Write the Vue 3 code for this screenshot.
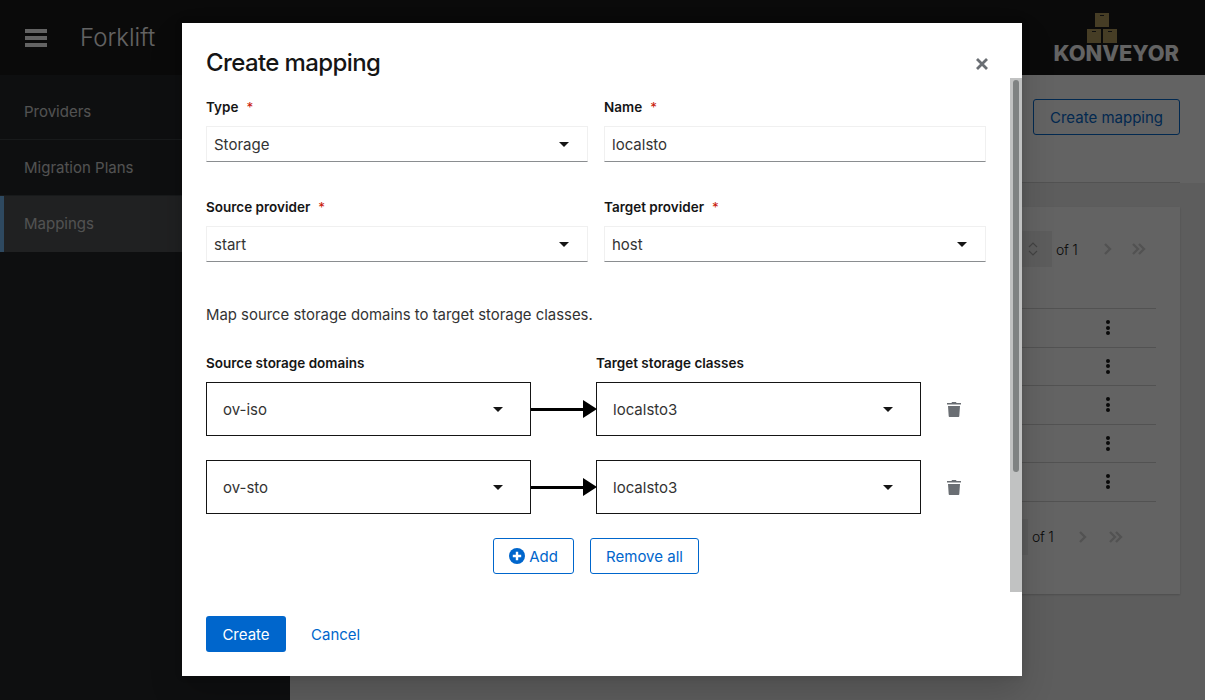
<script setup>
const nav = [
  { label: 'Providers', active: false },
  { label: 'Migration Plans', active: false },
  { label: 'Mappings', active: true },
]
const rows = [1, 2, 3, 4, 5]
const fields = [
  { label: 'Type', value: 'Storage', select: true },
  { label: 'Name', value: 'localsto', select: false },
  { label: 'Source provider', value: 'start', select: true },
  { label: 'Target provider', value: 'host', select: true },
]
const mappings = [
  { source: 'ov-iso', target: 'localsto3' },
  { source: 'ov-sto', target: 'localsto3' },
]
</script>

<template>
  <div class="page">
    <header class="masthead">
      <div class="brand">
        <div class="burger"><span></span><span></span><span></span></div>
        <span class="product">Forklift</span>
      </div>
      <div class="logo">
        <svg class="boxes" width="32" height="30" viewBox="0 0 32 30">
          <g fill="#b39b5c">
            <rect x="9" y="0" width="14" height="14" />
            <rect x="1" y="16" width="14" height="14" />
            <rect x="17" y="16" width="14" height="14" />
          </g>
          <g fill="#222">
            <rect x="14" y="2" width="4" height="1" />
            <rect x="6" y="18" width="4" height="1" />
            <rect x="22" y="18" width="4" height="1" />
          </g>
        </svg>
        <span class="logo-text">KONVEYOR</span>
      </div>
    </header>

    <div class="shell">
      <nav class="sidebar">
        <a v-for="item in nav" :key="item.label" class="nav-item" :class="{ active: item.active }">{{ item.label }}</a>
      </nav>
      <main class="main">
        <section class="toolbar">
          <div class="toolbar-inner">
            <button class="btn secondary page-btn">Create mapping</button>
          </div>
        </section>
        <section class="card">
          <div class="pager top">
            <span class="pager-input">
              <svg width="12" height="18" viewBox="0 0 12 18" fill="none" stroke="#aaa" stroke-width="1.2"><path d="M2 7l4-4 4 4M2 11l4 4 4-4" /></svg>
            </span>
            <span class="pager-of">of 1</span>
            <svg class="chev" width="12" height="12" viewBox="0 0 12 12" fill="none" stroke="#d2d2d2" stroke-width="2.4"><path d="M3 1l5 5-5 5" /></svg>
            <svg class="chev2" width="16" height="12" viewBox="0 0 16 12" fill="none" stroke="#d2d2d2" stroke-width="2.4"><path d="M2 1l5 5-5 5M8 1l5 5-5 5" /></svg>
          </div>
          <div class="table">
            <div v-for="r in rows" :key="r" class="row">
              <span class="kebab"><i></i><i></i><i></i></span>
            </div>
          </div>
          <div class="pager bottom">
            <span class="pager-input"></span>
            <span class="pager-of">of 1</span>
            <svg class="chev" width="12" height="12" viewBox="0 0 12 12" fill="none" stroke="#d2d2d2" stroke-width="2.4"><path d="M3 1l5 5-5 5" /></svg>
            <svg class="chev2" width="16" height="12" viewBox="0 0 16 12" fill="none" stroke="#d2d2d2" stroke-width="2.4"><path d="M2 1l5 5-5 5M8 1l5 5-5 5" /></svg>
          </div>
        </section>
      </main>
    </div>

    <div class="backdrop"></div>

    <div class="modal">
      <div class="modal-head">
        <h1>Create mapping</h1>
        <svg class="close" width="12" height="12" viewBox="0 0 12 12" stroke="#6a6e73" stroke-width="2.8"><path d="M1 1l10 10M11 1L1 11" /></svg>
      </div>
      <div class="modal-body">
        <div class="inner">
          <div class="form-grid">
            <div v-for="f in fields" :key="f.label" class="field">
              <label>{{ f.label }}<em>*</em></label>
              <div class="control">
                <span>{{ f.value }}</span>
                <i v-if="f.select" class="caret"></i>
              </div>
            </div>
          </div>
          <p class="hint">Map source storage domains to target storage classes.</p>
          <div class="map-head">
            <span>Source storage domains</span>
            <span>Target storage classes</span>
          </div>
          <div v-for="m in mappings" :key="m.source" class="map-row">
            <div class="map-box"><span>{{ m.source }}</span><i class="caret"></i></div>
            <div class="arrow"><span class="shaft"></span><span class="head"></span></div>
            <div class="map-box"><span>{{ m.target }}</span><i class="caret"></i></div>
            <svg class="trash" width="14" height="16" viewBox="0 0 14 16" fill="#6a6e73">
              <path d="M0 2h4.500l.5-1h4l.5 1H14v1.600H0z" />
              <path d="M1 5h12l-.7 10c0 .6-.5 1-1 1H2.700c-.5 0-1-.4-1-1z" />
            </svg>
          </div>
          <div class="map-actions">
            <button class="btn secondary add">
              <svg width="16" height="16" viewBox="0 0 16 16"><circle cx="8" cy="8" r="8" fill="#06c" /><path d="M8 3.800v8.400M3.800 8h8.400" stroke="#fff" stroke-width="2.400" /></svg>
              Add
            </button>
            <button class="btn secondary remove">Remove all</button>
          </div>
        </div>
        <div class="scrollbar"><span class="thumb"></span></div>
      </div>
      <div class="modal-foot">
        <button class="btn primary">Create</button>
        <button class="btn link">Cancel</button>
      </div>
    </div>
  </div>
</template>

<style scoped>
.page {
  position: relative;
  width: 1205px;
  height: 700px;
  overflow: hidden;
  background: #f0f0f0;
  font-family: Inter, "Open Sans", sans-serif;
  color: #151515;
}
.masthead {
  height: 75px;
  background: #151515;
  display: flex;
  align-items: center;
  justify-content: space-between;
  padding: 0 26px 0 25px;
  box-sizing: border-box;
}
.brand { display: flex; align-items: center; gap: 33px; }
.burger { display: flex; flex-direction: column; gap: 3px; width: 22px; }
.burger span { height: 4px; background: #fff; }
.product { color: #fff; font-size: 24px; font-weight: 300; }
.logo { display: flex; flex-direction: column; align-items: center; margin-top: 1px; }
.boxes { display: block; margin-right: 28px; }
.logo-text {
  color: #fff;
  font-weight: 800;
  font-size: 21.800px;
  line-height: 20px;
}
.shell { display: flex; height: 625px; }
.sidebar {
  width: 290px;
  flex: none;
  background: #212427;
  padding-top: 9px;
  box-sizing: border-box;
  display: flex;
  flex-direction: column;
}
.nav-item {
  height: 56px;
  line-height: 55px;
  padding-left: 24px;
  font-size: 15px;
  color: #d2d2d2;
  border-bottom: 1px solid #3c3f42;
  box-sizing: border-box;
}
.nav-item.active {
  background: #4f5255;
  border-left: 4px solid #73bcf7;
  padding-left: 20px;
  border-bottom: 0;
}
.main { flex: 1; min-width: 0; display: flex; flex-direction: column; align-items: stretch; }
.toolbar {
  height: 108px;
  box-sizing: border-box;
  background: #fff;
  padding: 0 25px 0 24px;
}
.toolbar-inner {
  height: 108px;
  box-sizing: border-box;
  display: flex;
  justify-content: flex-end;
  align-items: flex-start;
  padding-top: 24px;
  border-bottom: 1px solid #d2d2d2;
}
.card {
  margin: 24px 25px 0 24px;
  background: #fff;
  height: 387px;
  box-sizing: border-box;
  padding: 24px 24px 0;
  box-shadow: 0 1px 2px rgba(3, 3, 3, 0.2);
}
.pager { display: flex; align-items: center; justify-content: flex-end; font-size: 14px; }
.pager.top { height: 36px; }
.pager.bottom { height: 36px; margin-top: 17px; padding-right: 23px; }
.pager-input {
  width: 38px;
  height: 36px;
  background: #f0f0f0;
  display: flex;
  align-items: center;
  justify-content: center;
  flex: none;
}
.pager-of { margin-left: 4px; width: 46px; font-weight: 300; letter-spacing: -0.3px; }
.bottom .pager-of { width: 45px; }
.chev { margin-right: 17px; }
.bottom .chev { margin-right: 19px; }
.chev2 { margin-right: 9px; }
.table { margin-top: 41px; border-top: 1px solid #d2d2d2; }
.row {
  height: 38.500px;
  box-sizing: border-box;
  border-bottom: 1px solid #d2d2d2;
  display: flex;
  align-items: center;
  justify-content: flex-end;
  padding-right: 46px;
}
.kebab { display: flex; flex-direction: column; gap: 1.500px; }
.kebab i { width: 4px; height: 4px; border-radius: 50%; background: #151515; display: block; }

.backdrop {
  position: absolute;
  inset: 0;
  background: rgba(3, 3, 3, 0.62);
}
.modal {
  position: absolute;
  left: 182px;
  top: 23px;
  width: 840px;
  height: 653px;
  background: #fff;
  display: flex;
  flex-direction: column;
  box-shadow: 0 16px 32px rgba(3, 3, 3, 0.16), 0 0 8px rgba(3, 3, 3, 0.1);
}
.modal-head {
  height: 55px;
  flex: none;
  position: relative;
  padding: 24px 24px 0;
  box-sizing: border-box;
}
.modal-head h1 {
  margin: 0;
  font-size: 24px;
  font-weight: 500;
  letter-spacing: -0.6px;
  line-height: 31px;
}
.close { position: absolute; right: 34px; top: 35px; }
.modal-body {
  height: 514px;
  flex: none;
  overflow: hidden;
  display: flex;
}
.scrollbar {
  width: 12px;
  flex: none;
  background: #c1c2c2;
  box-sizing: border-box;
  padding: 2px 3px 0;
}
.thumb {
  display: block;
  height: 392px;
  background: #7f8282;
  border-radius: 3px;
}
.inner { flex: 1; min-width: 0; box-sizing: border-box; padding: 0 24px; }
.form-grid {
  display: grid;
  grid-template-columns: 382px 382px;
  column-gap: 16px;
  row-gap: 35px;
  padding-top: 19px;
}
.field label {
  display: block;
  font-size: 13.500px;
  font-weight: 600;
  line-height: 21px;
  margin-bottom: 8px;
  color: #151515;
}
.field em {
  font-style: normal;
  color: #c9190b;
  font-weight: 400;
  margin-left: 8px;
}
.control {
  height: 36px;
  box-sizing: border-box;
  border: 1px solid #f0f0f0;
  border-bottom-color: #8a8d90;
  display: flex;
  align-items: center;
  justify-content: space-between;
  padding: 0 18px 0 7px;
  font-size: 15px;
  color: #333;
}
.caret {
  display: block;
  width: 0;
  height: 0;
  border-left: 5px solid transparent;
  border-right: 5px solid transparent;
  border-top: 5px solid #151515;
  flex: none;
}
.hint {
  margin: 42px 0 0;
  font-size: 14.900px;
  line-height: 22px;
  color: #333;
}
.map-head {
  display: grid;
  grid-template-columns: 390px 1fr;
  margin-top: 27px;
  font-size: 13.500px;
  font-weight: 600;
  line-height: 21px;
}
.map-row {
  display: flex;
  align-items: center;
  margin-top: 8px;
  margin-bottom: 24px;
}
.map-row + .map-row { margin-top: 0; }
.map-box {
  width: 325px;
  height: 54px;
  box-sizing: border-box;
  border: 1px solid #151515;
  display: flex;
  align-items: center;
  justify-content: space-between;
  padding: 0 27px 0 16px;
  font-size: 15px;
  color: #333;
  flex: none;
}
.arrow { width: 66px; margin-right: -1px; flex: none; display: flex; align-items: center; position: relative; z-index: 1; }
.shaft { flex: 1; height: 3px; background: #000; }
.head {
  width: 0;
  height: 0;
  border-top: 9px solid transparent;
  border-bottom: 9px solid transparent;
  border-left: 14px solid #000;
}
.trash { margin-left: 26px; }
.map-actions {
  display: flex;
  justify-content: center;
  gap: 16px;
}
.btn {
  font-family: inherit;
  font-size: 15px;
  height: 36px;
  border-radius: 3px;
  box-sizing: border-box;
  background: none;
  border: 0;
  padding: 0;
  cursor: pointer;
}
.secondary { border: 1px solid #06c; color: #06c; background: #fff; }
.page-btn { width: 147px; }
.add { width: 81px; display: flex; align-items: center; justify-content: center; gap: 4px; }
.remove { width: 109px; }
.primary { background: #06c; color: #fff; width: 80px; }
.link { color: #06c; margin-left: 25px; }
.modal-foot {
  height: 84px;
  box-sizing: border-box;
  padding: 24px 24px 0;
  display: flex;
  align-items: flex-start;
}
</style>

<style>
body { margin: 0; }
</style>
